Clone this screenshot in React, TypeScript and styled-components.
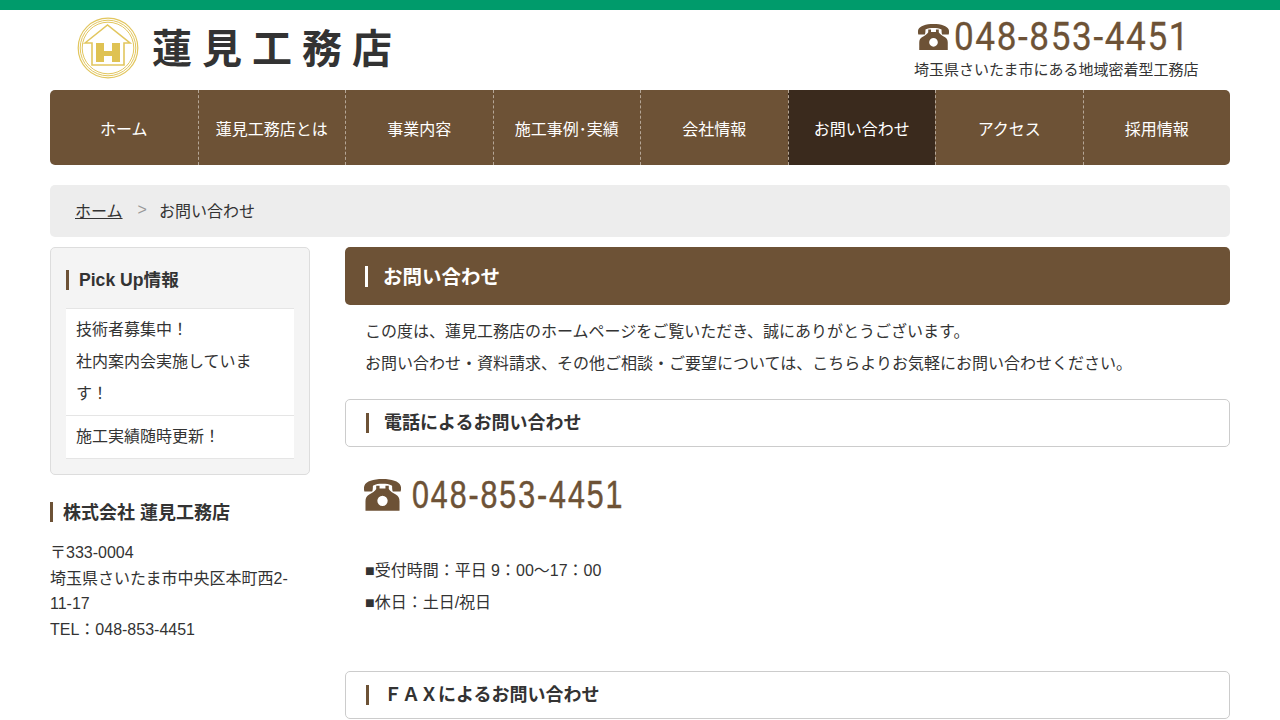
import React from "react";
import styled, { createGlobalStyle } from "styled-components";

const Global = createGlobalStyle`
  html, body { margin: 0; padding: 0; background: #fff; overflow: hidden; height: 720px; }
  body { font-family: "Liberation Sans", "Noto Sans CJK JP", sans-serif; font-size: 16px; color: #333; }
  * { box-sizing: border-box; }
`;

const Page = styled.div`
  border-top: 10px solid #009b6b;
  height: 720px;
  padding: 0 50px;
  overflow: hidden;
`;
const Header = styled.header`
  height: 80px;
  display: flex;
  justify-content: space-between;
`;
const Logo = styled.div`
  display: flex;
  align-items: flex-start;
  gap: 13px;
  padding: 7px 0 0 27px;
`;
const LogoText = styled.span`
  font-size: 40px;
  line-height: 58px;
  font-weight: 700;
  letter-spacing: 10px;
  color: #333;
  font-family: "Noto Sans CJK JP", sans-serif;
  white-space: nowrap;
`;
const Contact = styled.div`
  width: 285px;
  margin-right: 31px;
  display: flex;
  flex-direction: column;
  align-items: flex-start;
`;
const HeadTel = styled.div`
  display: flex;
  align-items: center;
  gap: 5px;
  height: 51px;
  padding-top: 3px;
  margin-left: 4px;
  color: #6d5236;
`;
const HeadNum = styled.span`
  display: inline-block;
  font-family: Roboto, sans-serif;
  font-weight: 400;
  font-size: 39px;
  letter-spacing: 1.8px;
  line-height: 1;
  width: 236px;
  -webkit-text-stroke: 0.3px #6d5236;
  transform: scaleX(0.9);
  transform-origin: left center;
  white-space: nowrap;
`;
const Catch = styled.div`
  font-size: 15px;
  line-height: 17px;
  white-space: nowrap;
`;
const Nav = styled.nav`
  height: 75px;
  border-radius: 5px;
  background: #6d5236;
  display: grid;
  grid-template-columns: repeat(8, 1fr);
  overflow: hidden;
`;
const NavItem = styled.a<{ $active?: boolean; $first?: boolean }>`
  display: flex;
  align-items: center;
  justify-content: center;
  color: #fff;
  font-size: 16px;
  background: ${(p) => (p.$active ? "#3a2a1d" : "transparent")};
  border-left: ${(p) => (p.$first ? "none" : "1px dashed #b5a696")};
`;
const Crumbs = styled.div`
  margin-top: 20px;
  height: 52px;
  background: #ededed;
  border-radius: 5px;
  display: flex;
  align-items: center;
  padding: 0 25px 2px;
`;
const CrumbLink = styled.a`
  text-decoration: underline;
`;
const CrumbSep = styled.span`
  color: #999;
  margin: 0 12px 0 15px;
`;
const Columns = styled.div`
  margin-top: 10px;
  display: grid;
  grid-template-columns: 260px 885px;
  column-gap: 35px;
  align-items: start;
`;
const PickBox = styled.section`
  background: #f4f4f4;
  border: 1px solid #ddd;
  border-radius: 5px;
  padding: 0 15px 15px;
`;
const PickTitle = styled.h3`
  margin: 22px 0 18px;
  height: 20px;
  padding: 0 0 0 10px;
  border-left: 3px solid #6d5236;
  font-size: 17.6px;
  line-height: 20px;
  font-weight: 700;
`;
const PickList = styled.ul`
  margin: 0;
  padding: 0;
  list-style: none;
  background: #fff;
  border-top: 1px solid #e5e5e5;
`;
const PickItem = styled.li`
  padding: 5px 40px 5px 10px;
  line-height: 32px;
  border-bottom: 1px solid #e5e5e5;
`;
const CompanyName = styled.h3`
  margin: 27px 0 18px;
  height: 20px;
  padding: 1px 0 0 10px;
  border-left: 3px solid #6d5236;
  font-size: 18px;
  line-height: 20px;
  font-weight: 700;
`;
const Address = styled.p`
  margin: 0;
  padding-right: 20px;
  line-height: 25.6px;
`;
const Title = styled.h1`
  margin: 0;
  height: 58px;
  background: #6d5236;
  border-radius: 5px;
  color: #fff;
  font-size: 19.5px;
  font-weight: 700;
  display: flex;
  align-items: center;
  padding-left: 20px;
`;
const TitleText = styled.span`
  border-left: 3px solid #fff;
  padding: 1px 0 0 15px;
  height: 21px;
  line-height: 21px;
`;
const Lead = styled.p`
  margin: 11px 0 19px;
  padding-left: 20px;
  line-height: 32px;
`;
const SubHead = styled.h2`
  margin: 0;
  height: 48px;
  background: #fff;
  border: 1px solid #ccc;
  border-radius: 5px;
  display: flex;
  align-items: center;
  padding-left: 20px;
  font-size: 18px;
  font-weight: 700;
`;
const SubText = styled.span`
  border-left: 3px solid #6d5236;
  padding-left: 15px;
  line-height: 20px;
`;
const BigTel = styled.div`
  display: flex;
  align-items: center;
  gap: 11px;
  margin: 28px 0 0 19px;
  height: 40px;
  color: #6d5236;
`;
const BigNum = styled.span`
  display: inline-block;
  font-family: "Liberation Sans", sans-serif;
  font-size: 38px;
  letter-spacing: 2.4px;
  line-height: 1;
  -webkit-text-stroke: 0.5px #6d5236;
  transform: scaleX(0.8);
  transform-origin: left center;
  white-space: nowrap;
`;
const Hours = styled.p`
  margin: 40px 0 52px;
  padding-left: 20px;
  line-height: 32px;
`;
const PhoneIcon = ({ width }: { width: number }) => (
  <svg width={width} height={width * 0.86} viewBox="0 0 100 86" fill="currentColor" aria-hidden="true">
    <path d="M50 0C25 0 6 6 1 18c-2 6-1 12 0 16h21c2-4 2-10 2-16 8-4 16-5 26-5s18 1 26 5c0 6 0 12 2 16h21c1-4 2-10 0-16C94 6 75 0 50 0Z" />
    <path
      fillRule="evenodd"
      d="M33 18h9v8h16v-8h9v9c3 6 11 11 19 15 7 4 10 10 10 18v26H4V60c0-8 3-14 10-18 8-4 16-9 19-15Zm17 27a14 14 0 1 0 0 28 14 14 0 0 0 0-28Z"
    />
  </svg>
);
const LogoMark = () => (
  <svg width="62" height="62" viewBox="0 0 62 62" aria-hidden="true">
    <g fill="none" stroke="#e2c65e">
      <circle cx="31" cy="31" r="29.8" strokeWidth="1.2" />
      <circle cx="31" cy="31" r="27.8" strokeWidth="1" />
      <circle cx="31" cy="31" r="25.8" strokeWidth="1" />
      <path d="M8 26 30.5 8 53 26H47V48H15V26Z" strokeWidth="1.6" />
    </g>
    <path fill="#dfc253" d="M19 26h8v8h8v-8h8v19h-8v-6h-8v6h-8Z" />
  </svg>
);

const nav = ["ホーム", "蓮見工務店とは", "事業内容", "施工事例･実績", "会社情報", "お問い合わせ", "アクセス", "採用情報"];

export default function App() {
  return (
    <Page>
      <Global />
      <Header>
        <Logo>
          <LogoMark />
          <LogoText>蓮見工務店</LogoText>
        </Logo>
        <Contact>
          <HeadTel>
            <PhoneIcon width={31} />
            <HeadNum>048-853-4451</HeadNum>
          </HeadTel>
          <Catch>埼玉県さいたま市にある地域密着型工務店</Catch>
        </Contact>
      </Header>
      <Nav>
        {nav.map((n, i) => (
          <NavItem key={n} $active={i === 5} $first={i === 0}>
            {n}
          </NavItem>
        ))}
      </Nav>
      <Crumbs>
        <CrumbLink>ホーム</CrumbLink>
        <CrumbSep>&gt;</CrumbSep>
        <span>お問い合わせ</span>
      </Crumbs>
      <Columns>
        <aside>
          <PickBox>
            <PickTitle>Pick Up情報</PickTitle>
            <PickList>
              <PickItem>
                技術者募集中！
                <br />
                社内案内会実施しています！
              </PickItem>
              <PickItem>施工実績随時更新！</PickItem>
            </PickList>
          </PickBox>
          <CompanyName>株式会社 蓮見工務店</CompanyName>
          <Address>
            〒333-0004
            <br />
            埼玉県さいたま市中央区本町西2-11-17
            <br />
            TEL：048-853-4451
          </Address>
        </aside>
        <main>
          <Title>
            <TitleText>お問い合わせ</TitleText>
          </Title>
          <Lead>
            この度は、蓮見工務店のホームページをご覧いただき、誠にありがとうございます。
            <br />
            お問い合わせ・資料請求、その他ご相談・ご要望については、こちらよりお気軽にお問い合わせください。
          </Lead>
          <SubHead>
            <SubText>電話によるお問い合わせ</SubText>
          </SubHead>
          <BigTel>
            <PhoneIcon width={37} />
            <BigNum>048-853-4451</BigNum>
          </BigTel>
          <Hours>
            ■受付時間：平日 9：00～17：00
            <br />
            ■休日：土日/祝日
          </Hours>
          <SubHead>
            <SubText>ＦＡＸによるお問い合わせ</SubText>
          </SubHead>
        </main>
      </Columns>
    </Page>
  );
}
